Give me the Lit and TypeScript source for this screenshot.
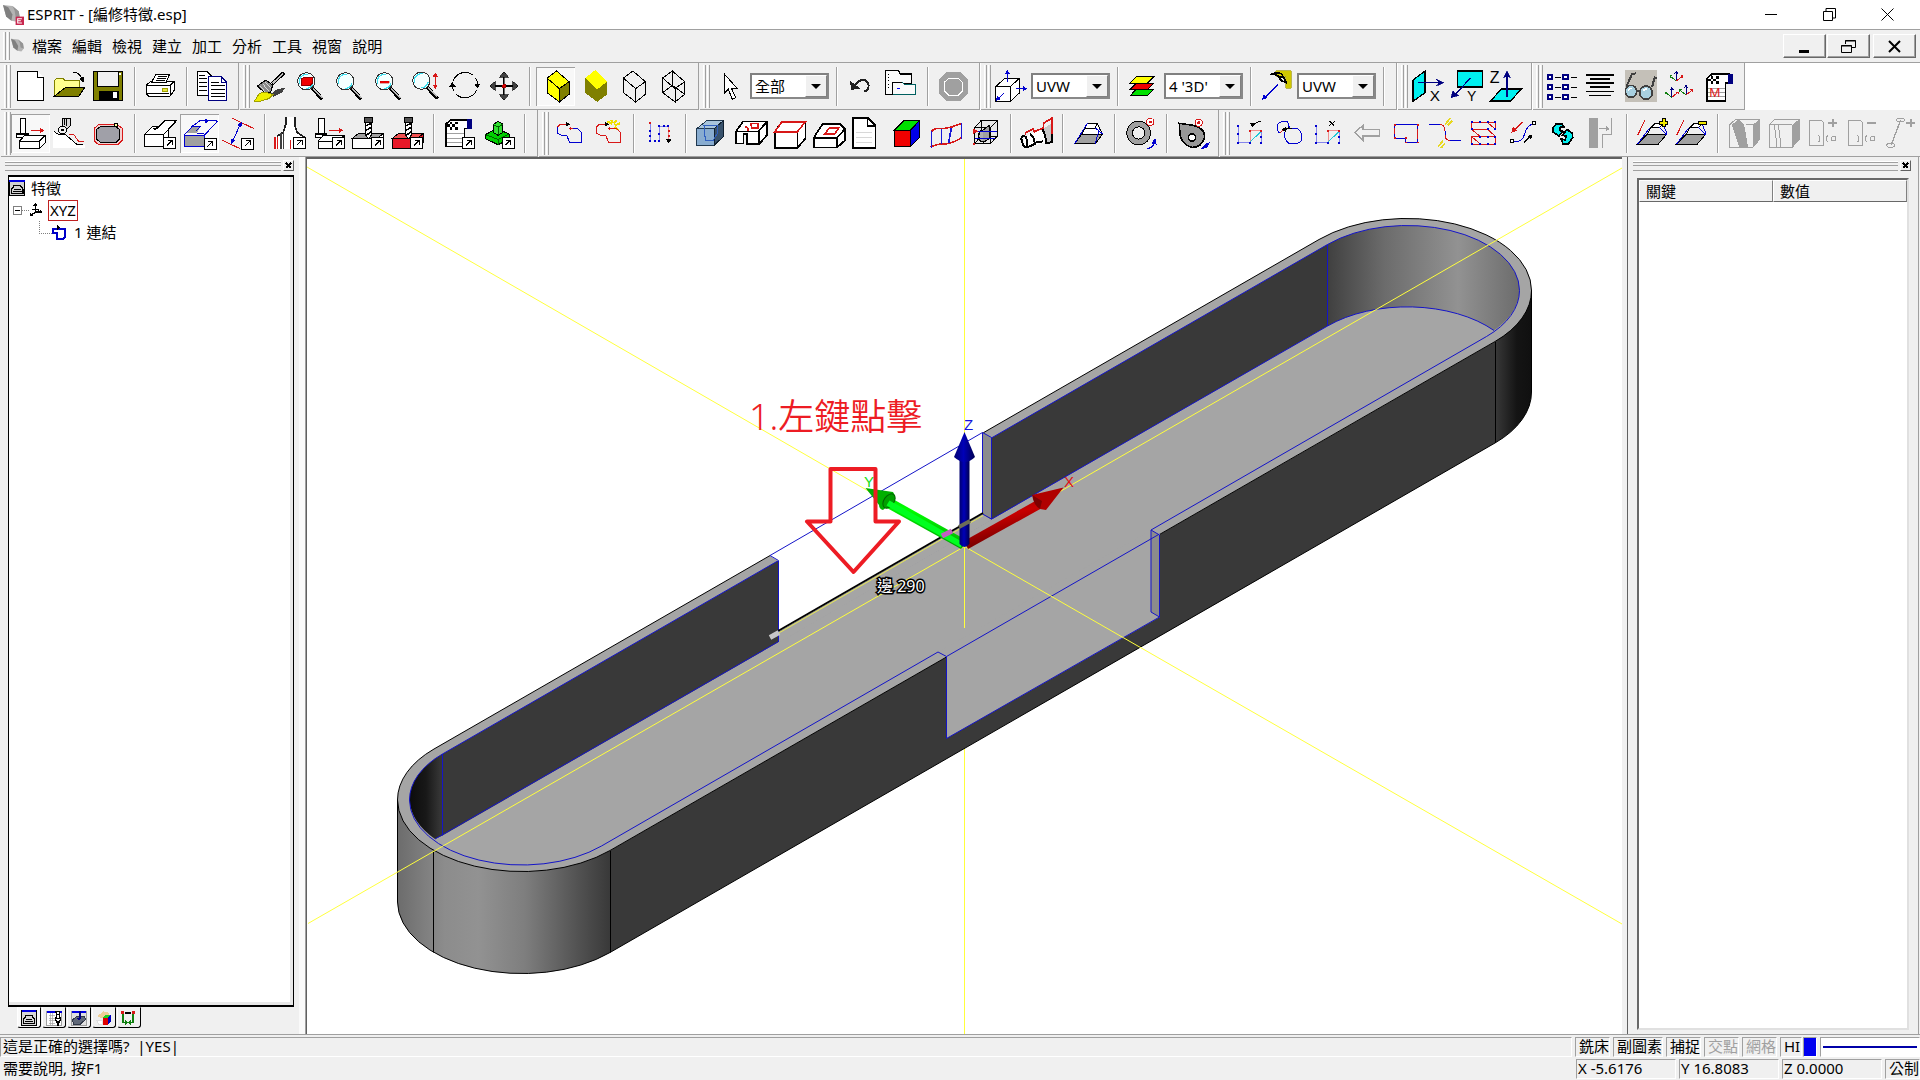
import { LitElement, html, svg, css, nothing } from "lit";
import { customElement, property } from "lit/decorators.js";

/* Icons are drawn on a sheet with three units to the pixel.
   Each icon names the corner of its cell on that sheet. */
type Shape = [d: string, fill?: string, stroke?: string, width?: number];
type Label = { t: string; x: number; y: number; c: string; s: number };
interface Icon { x: number; y: number; art: (Shape | Label)[]; }

const K = "#000";
const N = "none";
const W = "#fff";
const R = "#d81818";
const B = "#0000d0";
const NV = "#000080";
const G = "#a0a0a0";
const CY = "#00f0f0";

const circle = (cx: number, cy: number, r: number, ry = r) =>
  `M${cx - r} ${cy}A${r} ${ry} 0 1 1 ${cx + r} ${cy}A${r} ${ry} 0 1 1 ${cx - r} ${cy}Z`;

const badge = (x: number, y: number): Shape[] => [
  [`M${x} ${y}h36v33h-36Z`, W, K],
  [`M${x + 10} ${y + 24}L${x + 25} ${y + 9}M${x + 12} ${y + 8}h14v14`, N, K],
];

const lens = (cx: number, cy: number): Shape[] => [
  [`M${cx + 18} ${cy + 20}L${cx + 48} ${cy + 54}`, N, K, 11],
  [`M${cx + 20} ${cy + 20}L${cx + 48} ${cy + 50}`, N, "#b8b8b8", 4],
  [circle(cx, cy, 26), "#f4ffff", "#303030", 3],
  [`M${cx - 20} ${cy + 8}A22 22 0 0 1 ${cx + 4} ${cy - 21}M${cx + 20} ${cy + 4}A20 20 0 0 1 ${cx - 2} ${cy + 21}`, N, "#40e0f0", 4],
];

const cube = (x: number, top: string, left: string, right: string, line: string): Shape[] => [
  [`M${x} 54L${x + 29} 33L${x + 66} 65L${x + 37} 86Z`, top, line],
  [`M${x} 54L${x + 37} 86V126L${x} 98Z`, left, line],
  [`M${x + 37} 86L${x + 66} 65V103L${x + 37} 126Z`, right, line],
];

const triad = (x: number, y: number): Shape[] => [
  [`M${x} ${y}v-28m-5 6l5 -6l5 6`, N, NV],
  [`M${x} ${y}l18 -14m-5 -2h6v6`, N, R],
  [`M${x} ${y}l-18 -14m5 -2h-6v6`, N, "#108010"],
];

const chain = (x: number, a: string, b: string): Shape[] => [
  [`M${x} 200V220L${x + 12} 225H${x + 28}L${x + 36} 246H${x + 71}V216L${x + 60} 206H${x + 36}`, N, b],
  [`M${x} 202L${x + 10} 192H${x + 32}M${x + 46} 206H${x + 34}m6 -5v10`, N, a],
  [`M${x + 26} 186L${x + 40} 193L${x + 26} 200Z`, K, N],
];

const dotGrid = (x: number): Shape[] => [
  [`M${x + 3} 198V248H${x + 36}`, N, "#5050e8", 2],
  [`M${x + 38} 212H${x + 72}M${x + 38} 212V246`, N, "#f06060", 2],
  [`M${x + 72} 212V248`, N, "#5050e8", 2],
  [`M${x + 38} 246L${x + 72} 214`, N, "#20c8d8"],
  [`M${x} 198h6M${x} 222h6M${x} 248h6M${x + 34} 248h6M${x + 68} 230h6M${x + 68} 248h6`, N, B, 6],
  [`M${x + 34} 212h6M${x + 68} 212h6`, N, R, 6],
];

const ramp = (x: number): Shape[] => [
  [`M${x} 432L${x + 28} 404H${x + 86}L${x + 62} 432Z`, G, K],
  [`M${x + 28} 404L${x + 40} 382L${x + 52} 370H${x + 76}L${x + 66} 382H${x + 40}`, W, K],
  [`M${x + 66} 382L${x + 86} 404M${x} 432L${x + 36} 384M${x + 76} 370L${x + 88} 402`, N, B],
  [`M${x} 406L${x + 22} 360`, N, R],
];

const plate = (x: number): Shape[] => [
  [`M${x} 362H${x + 34}Q${x + 42} 362 ${x + 42} 370V436H${x}Z`, N, G],
  [`M${x + 28} 406Q${x + 36} 416 ${x + 28} 426M${x + 56} 406Q${x + 46} 416 ${x + 56} 426`, N, G],
  [circle(x + 73, 416, 7), N, G],
];

const mill = (x: number): Shape[] => [
  [`M${x + 10} 356H${x + 26}V402H${x + 10}Z`, W, K],
  [`M${x} 402H${x + 34}V413H${x}Z`, W, K, 4],
  [`M${x + 8} 424L${x + 24} 406H${x + 86}V428L${x + 68} 446H${x + 8}ZM${x + 8} 424H${x + 68}V446M${x + 68} 424L${x + 86} 406`, W, K],
  [`M${x + 42} 391H${x + 82}`, N, R],
  [`M${x + 70} 383L${x + 84} 391L${x + 70} 399Z`, R, N],
];

const drill = (x: number, block: string, body: string): Shape[] => [
  [`M${x} 416L${x + 20} 400H${x + 94}L${x + 76} 416Z`, body, K],
  [`M${x} 416H${x + 76}V444H${x}Z`, block, K],
  [`M${x + 76} 416L${x + 94} 400V426L${x + 76} 444Z`, block, K],
  [`M${x + 36} 352H${x + 62}V366H${x + 36}Z`, "#505050", K],
  [`M${x + 40} 366H${x + 58}V406L${x + 49} 416L${x + 40} 406Z`, W, K],
  [`M${x + 41} 378L${x + 57} 370M${x + 41} 392L${x + 57} 382M${x + 41} 406L${x + 57} 396`, N, K, 5],
];

const sheet = (x: number, y: number): Shape[] => [
  [`M${x} ${y + 14}L${x + 16} ${y}H${x + 66}V${y + 26}H${x + 56}V${y + 80}H${x}Z`, W, K, 5],
  [`M${x + 56} ${y + 26}H${x + 70}`, N, K, 5],
  [`M${x + 64} ${y}H${x + 76}V${y + 27}H${x + 64}Z`, NV, NV],
  [`M${x + 12} ${y + 6}h8v8h-8zM${x + 28} ${y + 6}h8v8h-8zM${x + 20} ${y + 14}h8v8h-8zM${x + 4} ${y + 14}h8v8h-8zM${x + 12} ${y + 22}h8v8h-8zM${x + 28} ${y + 22}h8v8h-8z`, K, N],
  [`M${x + 4} ${y + 42}H${x + 54}M${x + 4} ${y + 56}H${x + 54}M${x + 4} ${y + 68}H${x + 54}`, N, G],
];

const ICONS: Record<string, Icon> = {
  新增: { x: 33, y: 201, art: [["M52 214H112L131 233V301H52Z", W, K], ["M112 214V233H131", W, K]] },
  開啟: { x: 150, y: 201, art: [
    ["M162 288V242L170 235H188L194 241H238V264H196L172 289Z", "#ffff90", "#808000"],
    ["M162 289L196 263H254L236 289Z", "#808000", K],
    ["M220 218Q240 216 247 240", N, K], ["M238 236L254 230L250 250Z", K, N]] },
  儲存: { x: 267, y: 201, art: [
    ["M281 215H368V300H281Z", "#808000", K], ["M293 214H354V260H293Z", "#f0f0f0", K],
    ["M358 219h6v6h-6z", W, N], ["M297 272H356V300H297Z", K, N], ["M338 277H351V295H338Z", W, N]] },
  列印: { x: 423, y: 201, art: [
    ["M438 256L452 244H522V272L510 289H446L438 280Z", W, K], ["M438 256H510V289M510 256L522 244", N, K],
    ["M468 222H509L498 248H454Z", W, K], ["M474 229H500M470 235H498M467 241H494", N, K],
    ["M487 264H501V275H487Z", "#e8e840", "#a0a000"], ["M440 280H508", N, K]] },
  複製: { x: 579, y: 201, art: [
    ["M592 214H620L636 230V286H592Z", W, K], ["M598 226H616M598 236H622M598 247H622M598 258H622M598 270H622", N, K],
    ["M626 229H664L680 246V301H626Z", W, NV, 4], ["M664 229V246H680", N, NV],
    ["M633 246H656M633 257H674M633 268H674M633 279H674M633 290H674", N, K]] },
  重繪: { x: 750, y: 201, art: [
    ["M806 288L826 270L856 262L846 278L822 290Z", "#404040", N],
    ["M852 218L816 252", N, K, 11], ["M850 220L818 250", N, "#c0c0c0", 5],
    ["M772 258L798 240L818 256L812 276L796 280Z", "#8a8a8a", K],
    ["M780 258L796 276M788 252L806 272M796 246L814 264", N, W, 2],
    ["M763 304L778 280L794 276L818 284L806 296L780 304Z", "#f0f000", "#a0a000"]] },
  視窗縮放: { x: 867, y: 201, art: [...lens(919, 244), ["M905 237L911 233H937V249L931 255H905Z", "#f00000", "#900000"]] },
  放大: { x: 984, y: 201, art: lens(1036, 244) },
  縮小: { x: 1101, y: 201, art: [...lens(1153, 244), ["M1140 243H1168V250H1140Z", "#f00000", "#b00000", 1]] },
  動態縮放: { x: 1218, y: 201, art: [...lens(1264, 242), ["M1306 222V262", N, R], ["M1298 230L1306 217L1314 230ZM1298 254L1306 267L1314 254Z", R, N]] },
  旋轉: { x: 1335, y: 201, art: [
    ["M1360 242A38 38 0 0 1 1420 226M1427 234A38 38 0 0 1 1433 256M1430 270A38 38 0 0 1 1368 282M1362 274A38 38 0 0 1 1357 256", N, K],
    ["M1348 260L1357 246L1367 260ZM1423 252H1441L1432 266Z", K, N]] },
  平移: { x: 1452, y: 201, art: [
    ["M1512 228V288M1482 258H1542", N, K, 7], ["M1514 228V288", N, G, 2],
    ["M1498 232L1512 215L1526 232ZM1498 284L1512 301L1526 284ZM1486 244L1469 258L1486 272ZM1538 244L1555 258L1538 272Z", "#404040", K, 2],
    [circle(1512, 258, 6), "#e00000", "#900000", 2]] },
  著色邊線: { x: 108, y: 21, art: cube(141, "#ff0", "#ff0", "#808000", K) },
  著色: { x: 225, y: 21, art: [...cube(255, "#ff0", "#808000", "#808000", N), ["M255 54L286 30L322 64L292 88Z", "#ff0", N]] },
  隱藏線: { x: 342, y: 21, art: cube(370, N, N, N, K) },
  線框: { x: 459, y: 21, art: [...cube(488, N, N, N, K), ["M517 33V76L488 98M517 76L554 103", N, K]] },
  選取: { x: 633, y: 21, art: [["M675 41V101L688 88L700 118L710 113L698 86H715Z", W, K]] },
  復原: { x: 1032, y: 21, art: [["M1066 78Q1080 56 1098 61Q1112 68 1108 84Q1104 94 1094 95", N, "#202020", 6], ["M1053 62L1056 90L1084 86Z", "#202020", N]] },
  群組: { x: 1149, y: 21, art: [
    ["M1160 31H1198L1204 42H1238V70H1184V103H1160Z", "#fafafa", K, 4], ["M1168 42h3M1168 52h3M1168 62h3M1168 72h3M1168 82h3", N, K],
    ["M1181 66H1210L1216 74H1250V104H1181Z", "#fafafa", "#006060"], ["M1181 104V66H1210", N, K], ["M1194 86h10", N, "#0000ff"]] },
  停止: { x: 1305, y: 21, art: [
    ["M1342 36H1384L1407 58V101L1384 124H1342L1320 101V58Z", "#a0a0a0", N],
    ["M1350 54H1377L1390 67V93L1377 107H1350L1336 93V67Z", N, W]] },
  工作平面: { x: 36, y: 21, art: [
    ["M50 80L76 56H120V100L94 124H50Z", W, K], ["M50 80H94V124M94 80L120 56", N, K],
    ["M85 66V36M110 86H140M76 98L54 120", N, B],
    ["M78 42L85 29L93 42ZM132 78L145 86L132 93ZM50 123L54 108L65 118Z", B, N]] },
  圖層: { x: 435, y: 21, art: [
    ["M472 87H524L506 107H454Z", "#00e000", K], ["M472 69H524L506 88H454Z", "#f00000", K], ["M472 50H524L506 69H454Z", "#ff0", K]] },
  視角: { x: 834, y: 21, art: [
    ["M890 32H936V84H920V48H890Z", "#d0c800", "#a09800", 2],
    ["M874 44Q894 34 908 42L924 70M882 40Q900 52 918 54M900 52Q904 64 920 66", N, K, 5],
    ["M897 74L858 112", N, B], ["M849 119L854 103L866 114Z", B, N]] },
  X向: { x: 21, y: 201, art: [
    ["M36 240L72 213V278L36 304Z", CY, K, 4], ["M52 248H120", N, NV, 4], ["M106 238L128 248L106 258L114 248Z", NV, NV, 2],
    { t: "X", x: 86, y: 303, c: K, s: 46 }] },
  Y向: { x: 138, y: 201, art: [
    ["M170 213H244V261H170Z", CY, K, 4], ["M209 234L160 286", N, NV, 4], ["M150 293L156 272L162 282L174 286Z", NV, NV, 2],
    { t: "Y", x: 198, y: 303, c: K, s: 42 }] },
  Z向: { x: 255, y: 201, art: [
    ["M268 303L302 267H362L328 303Z", CY, K, 4], ["M318 290V222", N, NV, 4], ["M308 234L318 212L328 234L318 227Z", NV, NV, 2],
    { t: "Z", x: 266, y: 250, c: K, s: 48 }] },
  屬性: { x: 429, y: 201, art: [
    ["M443 226H457V238H443ZM490 226H504V238H490ZM443 256H457V268H443ZM490 256H504V268H490ZM443 286H457V298H443ZM490 286H504V298H490Z", W, NV, 6],
    ["M464 232H482M514 232H531M464 262H482M514 262H531M464 292H482M514 292H531", N, K, 5]] },
  清單: { x: 546, y: 201, art: [["M558 225H642M570 237H630M558 249H642M570 261H630M558 274H642M566 286H634", N, K, 5]] },
  遮罩: { x: 663, y: 201, art: [
    ["M676 211H770V306H676Z", "#c4c0b8", N],
    [circle(693, 274, 17, 18), "#a8d0e0", "#404040", 5], [circle(738, 278, 19, 20), "#a8d0e0", "#404040", 5],
    ["M710 272L720 274M680 258L696 222L708 220M756 262L764 232L770 236", N, "#404040", 6],
    ["M684 270L694 264M728 272L740 266", N, W, 5]] },
  座標系: { x: 780, y: 201, art: [...triad(829, 243), ...triad(815, 292), ...triad(858, 285)] },
  巨集: { x: 897, y: 201, art: [...sheet(920, 222), { t: "M", x: 928, y: 292, c: "#e02020", s: 40 }] },

  銑削: { x: 33, y: 342, art: mill(50) },
  輪廓: { x: 150, y: 342, art: [
    ["M160 392L178 404H196L230 436H254V444H160Z", W, N],
    ["M188 354H210V378L196 392L180 384L188 376Z", "#d8d8d8", K], ["M192 354V374M200 354V378", N, K],
    [circle(187, 390, 12), "#f0f0f0", K], [circle(187, 390, 3), K, K],
    ["M206 402H220L236 424H252", N, R], ["M162 394L176 404H196L232 434H250", N, K]] },
  口袋: { x: 267, y: 342, art: [
    ["M298 372H350L366 384V422L354 434H296L284 424V384Z", "#f4d0d0", R],
    ["M302 380H348L358 388V418L350 426H300L290 418V388Z", "#a0a0a8", K],
    [circle(348, 375, 6), "#ffffa0", K]] },
  面: { x: 423, y: 342, art: [
    ["M432 404L460 378H474L464 390L496 361H528L504 390V438H432Z", W, K], ["M432 404H490V438M490 404L528 364M496 361L474 384H460", N, K], ...badge(491, 412)] },
  實體面: { x: 540, y: 342, art: [
    ["M552 405H614V440H552Z", "#a0a0a0", B], ["M578 378H602L590 400H558Z", "#a0a0a0", N],
    ["M552 405H614L652 364M600 362H652M552 405L578 378H602L590 392M578 378L600 362M590 400H612", N, B],
    ["M614 355L628 363L614 371Z", B, N], ...badge(612, 416)] },
  斷面: { x: 657, y: 342, art: [
    ["M696 354L762 386M666 420L720 446", N, R], ["M722 370L696 428", N, B],
    ["M726 364L724 382L712 376ZM692 434L693 416L705 422Z", B, N], ...badge(725, 414)] },
  車削: { x: 813, y: 342, art: [
    ["M858 352H886L890 392L914 412V446H826V412L850 392Z", W, N],
    ["M858 352V370L850 396L830 410M884 352V374L892 398L914 412", N, "#202020", 5],
    ["M824 410V446M832 410V446", N, R, 5], ["M842 400V446M850 396V446", N, "#404040", 5], ["M871 420V446", N, R, 5], ...badge(880, 412)] },
  輪廓銑: { x: 930, y: 342, art: [...mill(946), ...badge(998, 412)] },
  鑽孔: { x: 1047, y: 342, art: [...drill(1056, W, G), ...badge(1115, 412)] },
  模具: { x: 1164, y: 342, art: [...drill(1176, "#e81828", "#f05050"), ...badge(1232, 412)] },
  報表: { x: 1320, y: 342, art: [...sheet(1337, 359), ...badge(1388, 412)] },
  模擬: { x: 1437, y: 342, art: [
    ["M1456 404L1490 386L1528 402V418L1494 434L1456 416Z", "#00d000", K], ["M1456 404L1494 418L1528 402M1494 418V434", N, "#006000"],
    ["M1480 374L1494 364L1508 372V398L1494 406L1480 398Z", "#30e030", K], ["M1480 374L1494 381L1508 373M1494 381V404", N, "#006000"], ...badge(1506, 412)] },

  連結: { x: 147, y: 162, art: chain(172, R, B) },
  自動連結: { x: 264, y: 162, art: [
    ["M336 192L322 184M338 190L334 180M342 190L350 180M344 196L360 190M344 200L356 210", N, "#f0e000", 6], ...chain(289, R, R)] },
  點群: { x: 420, y: 162, art: [
    ["M452 190V242M478 242V199H504", N, "#5050e8", 2], ["M506 202V240", N, "#f06060", 2], ["M498 238H514L506 250Z", K, N],
    ["M448 214h6M448 228h6M448 242h6M462 242h6M475 242h6M475 222h6M475 199h6M490 199h6M502 199h6", N, B, 6], ["M448 188h6M503 214h6M503 228h6", N, R, 6]] },
  實體: { x: 576, y: 162, art: [
    ["M590 206L620 182H670L642 206Z", "#a8c4dc", "#203850"], ["M590 206H642V256H590Z", "#88acd0", "#203850"],
    ["M642 206L670 182V230L642 256Z", "#38526c", "#102030"], ["M612 196H652V220L640 240H616Z", N, "#3060c0"]] },
  孔特徵: { x: 693, y: 162, art: [
    ["M708 214L730 184H800V226L778 252H740V222H730V250H708Z", W, K, 5], ["M708 214H776L798 188M776 214V250", N, K, 5],
    ["M746 214Q744 202 736 200M752 190H774V204H756Z", N, R, 5]] },
  面特徵: { x: 810, y: 162, art: [
    ["M825 214L845 186H916V236L892 264H825Z", W, K, 5], ["M892 216V264", N, K, 5], ["M825 215L845 186H916L892 215Z", W, R, 5]] },
  凸台: { x: 927, y: 162, art: [
    ["M942 232L968 192H1020L1034 206V242L1012 262H942Z", W, K, 5], ["M942 234H1010V262M1010 234L1034 208", N, K, 5],
    ["M974 222L988 204H1016L1004 222Z", N, R, 5]] },
  文件: { x: 1044, y: 162, art: [["M1059 174H1104L1126 196V264H1059Z", W, K, 5], ["M1102 174V198H1126", N, K, 5], ["M1068 216H1116M1068 232H1116M1068 248H1116", N, "#d8d8d8"]] },
  彩色實體: { x: 1161, y: 162, art: [
    ["M1184 210L1212 181H1259L1232 210Z", "#00e000", K], ["M1184 210H1232V259H1184Z", "#f00000", K], ["M1232 210L1259 181V232L1232 259Z", "#0000e8", K]] },
  曲面: { x: 1278, y: 162, art: [
    ["M1294 216Q1302 202 1330 206Q1360 202 1384 190M1292 262Q1310 250 1338 252Q1362 248 1384 234", N, R, 5],
    ["M1294 214V264M1324 208V252M1354 204L1346 248M1384 190V236", N, "#1818d8", 5]] },
  零件: { x: 1395, y: 162, art: [
    ["M1424 202L1444 181H1492V228L1472 250H1424Z", "#e8e8e8", K], ["M1424 202H1472V250M1472 202L1492 181M1444 181V228H1492M1444 228L1424 250", N, K],
    [circle(1450, 228, 14, 18), "#b0b0b0", K, 4], ["M1450 210L1468 196V236L1450 246", "#a0a0a0", K],
    ["M1424 214H1490M1424 236H1484", N, B], ["M1420 206L1434 214L1420 222Z", R, N], ["M1420 250h6v6h-6z", R, N]] },
  轉角: { x: 111, y: 162, art: [
    ["M130 236L150 222L190 208L216 196V246L190 248L150 262H134Z", W, N],
    ["M190 206L216 190V246L196 250Z", "#c8c8c8", N],
    ["M124 236Q128 222 138 232Q146 252 140 262Q128 262 124 236ZM150 222Q164 230 164 252L142 262M164 248L190 244M186 206Q198 226 198 250L216 246V198", N, K, 6],
    ["M136 224V218L160 206L164 220M164 214L190 204V190L216 174V222", N, R, 5]] },
  拔模: { x: 267, y: 162, art: [
    ["M284 251L306 222H368L346 251Z", G, K], ["M306 222L322 190H352L368 222", W, K], ["M314 206L322 190H352L346 204Z", W, K], ["M284 251L322 190M346 251L358 206M346 204L368 222", N, B]] },
  環: { x: 423, y: 162, art: [
    [circle(476, 219, 27), N, K, 20], [circle(476, 219, 27), N, "#a0a0a0", 14],
    [circle(511, 186, 11), W, R], [circle(511, 186, 3), R, R],
    ["M502 266Q520 264 524 244", N, B, 4], ["M514 250L526 234L530 254Z", B, N]] },
  凸輪: { x: 579, y: 162, art: [
    ["M598 190L640 196Q676 206 674 232Q664 264 634 262Q606 252 600 226Z", "#989898", K, 5], [circle(636, 232, 11), W, K, 5],
    [circle(656, 188, 11), W, R], [circle(656, 188, 3), R, R], ["M668 264Q682 264 686 250L676 254Z", B, B, 4]] },
  匯入點: { x: 753, y: 162, art: [...dotGrid(775), ["M846 184Q828 186 824 196", N, K], ["M814 190L830 190L820 202Z", K, N]] },
  圓弧: { x: 870, y: 162, art: [
    ["M902 220Q890 206 896 192Q908 180 926 186L932 206H956Q972 216 966 244Q950 256 930 250Q914 240 916 216", N, B],
    ["M902 220L916 206", N, R], ["M938 206Q926 202 920 208", N, K, 4], ["M908 210L920 200L922 216Z", K, N]] },
  刪除點: { x: 987, y: 162, art: [...dotGrid(1009), ["M1052 184L1066 197M1068 184L1050 197", N, K]] },
  反向: { x: 1104, y: 162, art: [["M1128 217L1152 196V208H1201V228H1152V241Z", N, G, 4]] },
  裁剪: { x: 1221, y: 162, art: [
    ["M1246 194H1315V247H1280V234H1246Z", N, B], ["M1315 206V236M1246 204V222", N, R], ["M1244 194h6M1313 194h6M1244 234h6M1277 234h6M1277 247h6M1313 247h6", N, R, 5]] },
  圓角: { x: 78, y: 342, art: [
    ["M90 374H122Q138 374 138 392V404Q138 421 152 421H186", N, B], ["M122 374Q138 374 138 392M138 404Q138 420 152 421", N, R],
    ["M138 374L154 354M146 376L160 362M118 440L132 422M126 444L138 430", N, "#e8d820", 5]] },
  格點: { x: 195, y: 342, art: [
    ["M218 368H290V388L266 368M218 368V388L244 410H218V432L290 432V410L266 388H218M244 388H266M244 410H290M218 410L244 432", N, R],
    ["M217 366h6M241 366h6M264 366h6M286 366h6M217 388h6M264 388h6M286 388h6M241 410h6M264 410h6M286 410h6M217 432h6M241 432h6M264 432h6M286 432h6", N, B, 6]] },
  延伸: { x: 312, y: 342, art: [
    ["M344 424Q370 428 376 404Q384 376 402 372", N, B], [circle(339, 423, 5), W, K], [circle(405, 369, 5), W, K],
    ["M370 366L346 390", N, R, 4], ["M337 398L342 380L356 392Z", R, N], ["M374 428L392 412", N, K, 4], ["M400 404L396 420L384 408Z", K, N]] },
  更新: { x: 429, y: 342, art: [
    ["M461 384L472 371H488L496 382L484 380L482 392L492 394L480 408L462 396Z", CY, K, 5],
    ["M521 412L508 432H492L486 416L498 420L502 408L490 406L504 388L520 400Z", CY, K, 5]] },
  靠齊: { x: 546, y: 342, art: [["M570 354H597V444H570Z", "#a0a0a0", N], ["M600 386H626M637 354V404H610V444", N, G], ["M622 378L632 386L622 394Z", G, N]] },
  加入面: { x: 702, y: 342, art: [...ramp(716), ["M794 354V382M780 368H808", N, K, 11], ["M794 357V379M783 368H805", N, "#f0e800", 5]] },
  移除面: { x: 819, y: 342, art: [...ramp(833), ["M896 368H924", N, K, 11], ["M899 368H921", N, "#f0e800", 5]] },
  分割一: { x: 975, y: 342, art: [
    ["M992 374L1010 358H1082V418L1062 442H992Z", N, G], ["M1000 374L1020 360L1034 374L1046 442H1022Z", "#a0a0a0", G], ["M1062 376L1082 360V418L1062 442Z", "#a0a0a0", G], ["M1040 374H1062", N, G]] },
  分割二: { x: 1092, y: 342, art: [
    ["M1110 374L1128 358H1200V418L1180 442H1110Z", N, G], ["M1110 374H1180", N, G], ["M1180 376L1200 360V418L1180 442Z", "#a0a0a0", G],
    ["M1126 372L1134 440M1138 372L1146 440", N, G]] },
  加孔: { x: 1209, y: 342, art: [...plate(1231), ["M1301 356V382M1288 369H1314", N, G, 7]] },
  減孔: { x: 1326, y: 342, art: [...plate(1348), ["M1405 368H1432", N, G, 7]] },
  加路徑: { x: 1443, y: 342, art: [
    [circle(1505, 360, 12, 6), N, G], [circle(1475, 436, 12, 6), N, G], ["M1505 360L1477 434", N, G, 4], ["M1535 356V382M1522 369H1548", N, G, 7]] },
};

const SMALL: Record<string, Icon> = {
  feature: { x: 26, y: 90, art: [
    ["M28 92H73V136H28Z", "#d0d0d0", K, 4], ["M27 93H74", N, "#0000e0", 6],
    ["M34 130V118L42 106H60L68 118V130Z", "#d0d0d0", K, 4], ["M40 118H62M38 124H64", N, K, 3]] },
  axes: { x: 92, y: 156, art: [
    ["M111 162V190M111 186H130M111 186L96 198", N, K, 4], ["M104 168L111 158L118 168ZM124 178L134 186L124 192ZM94 200L96 190L104 198Z", K, N],
    ["M102 178H120V190", N, K, 4]] },
  chain: { x: 156, y: 220, art: [["M160 234H196V260L190 264H170V248H160Z", W, "#0000c8", 6], ["M172 224L182 231L172 238Z", K, N]] },
  tabFeature: { x: 66, y: 90, art: [
    ["M68 92H111V136H68Z", "#d8d8d8", K, 3], ["M68 94H112", N, "#0000e0", 6],
    ["M74 130V118L82 106H98L106 118V130Z", "#d8d8d8", K, 4], ["M80 118H100M78 124H102", N, K, 3]] },
  tabTool: { x: 140, y: 90, art: [
    ["M142 94H186V136H142Z", W, G, 3], ["M142 95H188", N, "#0000e0", 6], ["M148 106H168M148 114H168M148 122H168M148 130H168M152 100V134M160 100V134", N, G, 2],
    ["M170 94H180V108L184 116L176 136L168 116L172 108Z", W, K, 4], ["M170 104H182M170 116H182M172 126H180", N, K, 4]] },
  tabPart: { x: 216, y: 90, art: [
    ["M218 94H262V136H218Z", "#e0e0e0", G, 3], ["M218 95H262", N, "#0000e0", 6], ["M220 120L236 108H256L260 118L244 132H224Z", "#606878", "#303848"],
    ["M244 92V114L236 118", N, NV, 6]] },
  tabSolid: { x: 292, y: 90, art: [
    ["M296 108L314 94L330 98L334 108L310 116Z", "#f0d098", N], ["M294 120H312V132H300Z", W, "#e0e0e0"],
    ["M312 114L322 104H336L328 114Z", "#20d020", N], ["M312 114H328V134H312Z", "#e00000", N], ["M328 114L336 104V124L328 134Z", "#0000c0", N]] },
  tabPath: { x: 368, y: 90, art: [
    ["M374 128V98M404 98V128M374 128H384M404 128H394M380 122L386 128L380 134M398 122L392 128L398 134", N, "#108010", 4],
    ["M380 98H398", N, K, 5], ["M368 94h10v8h-10zM400 94h10v8h-10z", R, N]] },
};

const drawIcon = (icon: Icon, units = 117, size = 39) => svg`
  <svg viewBox="${icon.x} ${icon.y} ${units} ${units}" width=${size} height=${size} aria-hidden="true">
    ${icon.art.map((s) => Array.isArray(s)
      ? svg`<path d=${s[0]} fill=${s[1] ?? N} stroke=${s[2] ?? K} stroke-width=${s[3] ?? 3}></path>`
      : svg`<text x=${s.x} y=${s.y} fill=${s.c} font-size=${s.s} font-family="Liberation Sans, sans-serif">${s.t}</text>`)}
  </svg>`;

type Item = string | { pick: string; options: string[]; name: string };
interface Bar { items: Item[]; on?: string[]; }

const SEP = "|";
const TOP_BARS: Bar[] = [
  { items: ["新增", "開啟", "儲存", SEP, "列印", SEP, "複製"] },
  { items: ["重繪", "視窗縮放", "放大", "縮小", "動態縮放", "旋轉", "平移", SEP, "著色邊線", "著色", "隱藏線", "線框"], on: ["著色邊線"] },
  { items: ["選取", { name: "選取類型", pick: "全部", options: ["全部"] }, SEP, "復原", "群組", SEP, "停止"] },
  { items: ["工作平面", { name: "平面", pick: "UVW", options: ["UVW"] }, SEP, "圖層", { name: "層", pick: "4 '3D'", options: ["4 '3D'"] }, SEP,
    "視角", { name: "視圖", pick: "UVW", options: ["UVW"] }, SEP] },
  { items: ["X向", "Y向", "Z向"] },
  { items: ["屬性", "清單", "遮罩", "座標系", "巨集"] },
];
const LOW_BARS: Bar[] = [
  { items: ["銑削", "輪廓", "口袋", SEP, "面", "實體面", "斷面", SEP, "車削", "輪廓銑", "鑽孔", "模具", SEP, "報表", "模擬", SEP], on: ["銑削", "實體面"] },
  { items: ["連結", "自動連結", SEP, "點群", SEP, "實體", "孔特徵", "面特徵", "凸台", "文件", "彩色實體", "曲面", "零件", SEP, "轉角", SEP, "拔模", SEP, "環", SEP, "凸輪"] },
  { items: ["匯入點", "圓弧", "刪除點", "反向", "裁剪", "圓角", "格點", "延伸", "更新", "靠齊", SEP, "加入面", "移除面", SEP, "分割一", "分割二", "加孔", "減孔", "加路徑"] },
];

const MENUS = ["檔案", "編輯", "檢視", "建立", "加工", "分析", "工具", "視窗", "說明"];
const FONT = css`"Noto Sans", "Noto Sans CJK TC", sans-serif`;

@customElement("tool-strip")
export class ToolStrip extends LitElement {
  @property({ attribute: false }) bar: Bar = { items: [] };

  static styles = css`
    :host { display: flex; box-sizing: border-box; height: 47px; padding: 4px 6px 3px 0; background: #f0f0f0;
      border-right: 1px solid #a0a0a0; border-bottom: 1px solid #a0a0a0; }
    .grip { width: 7px; margin: -2px 0 0 3px; height: 43px; box-sizing: border-box; display: flex; gap: 1px; flex: none; }
    .grip i { width: 3px; box-sizing: border-box; border-right: 1px solid #a0a0a0; border-left: 1px solid #fff; }
    button { width: 39px; height: 39px; padding: 0; border: 0; background: none; flex: none; display: block; }
    button svg { display: block; shape-rendering: crispEdges; overflow: visible; }
    .on { background: #f8f8f8; box-shadow: inset 1px 1px #a0a0a0, inset -1px -1px #fff; }
    .sep { width: 13px; flex: none; display: flex; justify-content: center; }
    .sep i { width: 1px; background: #a0a0a0; border-right: 1px solid #fff; }
    .combo { width: 79px; height: 26px; margin: 6px 1px; display: grid; grid-template-columns: 1fr 22px; box-sizing: border-box;
      border: 2px solid; border-color: #808080 #888 #888 #808080; background: #fff; flex: none; }
    select { grid-area: 1 / 1 / 2 / 3; appearance: none; border: 0; margin: 0; padding: 0 0 0 3px; background: none; min-width: 0;
      font: 15px/20px ${FONT}; color: #000; }
    .drop { grid-area: 1 / 2 / 2 / 3; background: #f0f0f0; border: 1px solid; border-color: #fff #808080 #808080 #fff;
      display: flex; align-items: center; justify-content: center; pointer-events: none; }
    .drop i { border: 5px solid transparent; border-top-color: #000; border-bottom: 0; }
  `;

  render() {
    return html`<span class="grip"><i></i><i></i></span>
      ${this.bar.items.map((item) => {
        if (item === SEP) return html`<span class="sep"><i></i></span>`;
        if (typeof item === "string") {
          return html`<button class=${this.bar.on?.includes(item) ? "on" : ""} aria-label=${item}>${drawIcon(ICONS[item])}</button>`;
        }
        return html`<span class="combo">
          <select aria-label=${item.name}>${item.options.map((o) => html`<option ?selected=${o === item.pick}>${o}</option>`)}</select>
          <span class="drop"><i></i></span></span>`;
      })}`;
  }
}

@customElement("model-view")
export class ModelView extends LitElement {
  static styles = css`
    :host { display: block; min-width: 0; min-height: 0; background: #fff; overflow: hidden; }
    svg { display: block; width: 100%; height: 100%; }
    .edge { fill: none; stroke: #000; stroke-width: 1; }
    .heavy { fill: none; stroke: #000; stroke-width: 2; }
    .hot { fill: none; stroke: #1414c8; stroke-width: 1; }
    .guide { fill: none; stroke: #ffff3c; stroke-width: 1; }
    .top { fill: #a5a5a5; }
    .wall { fill: #393939; }
    .side { fill: #8c8c8c; }
    .note { font: 36px ${FONT}; font-weight: 350; fill: #ed1c24; }
    .mark { fill: none; stroke: #ed1c24; stroke-width: 4; stroke-linejoin: round; }
    .tip { font: 16px ${FONT}; fill: #fff; stroke: #000; stroke-width: 3; paint-order: stroke; }
    .axis { font: 15px "Liberation Sans", sans-serif; }
  `;

  render() {
    return html`<svg viewBox="307 159 1315 875" preserveAspectRatio="xMidYMid slice" role="img" aria-label="模型">
      <defs>
        <linearGradient id="drumL"><stop offset="0" stop-color="#6c6c6c"/><stop offset=".22" stop-color="#8c8c8c"/><stop offset=".38" stop-color="#929292"/><stop offset=".6" stop-color="#7e7e7e"/><stop offset=".85" stop-color="#525252"/><stop offset="1" stop-color="#393939"/></linearGradient>
        <linearGradient id="drumR"><stop offset="0" stop-color="#393939"/><stop offset=".6" stop-color="#141414"/><stop offset="1" stop-color="#101010"/></linearGradient>
        <linearGradient id="bowlR"><stop offset="0" stop-color="#404040"/><stop offset=".3" stop-color="#6c6c6c"/><stop offset=".68" stop-color="#929292"/><stop offset="1" stop-color="#6c6c6c"/></linearGradient>
        <linearGradient id="bowlL"><stop offset="0" stop-color="#0c0c0c"/><stop offset=".5" stop-color="#181818"/><stop offset="1" stop-color="#3a3a3a"/></linearGradient>
        <linearGradient id="zRod"><stop offset="0" stop-color="#000070"/><stop offset=".45" stop-color="#0000b8"/><stop offset="1" stop-color="#000050"/></linearGradient>
        <linearGradient id="xRod" x1="0" y1="0" x2=".4" y2="1"><stop offset="0" stop-color="#900000"/><stop offset=".45" stop-color="#c80000"/><stop offset="1" stop-color="#600000"/></linearGradient>
        <linearGradient id="yRod" x1="1" y1="0" x2=".6" y2="1"><stop offset="0" stop-color="#00b000"/><stop offset=".45" stop-color="#00ff00"/><stop offset="1" stop-color="#008000"/></linearGradient>
      </defs>

      <path class="guide" d="M964.5 158V440M964.5 740V1034"/>

      <path fill="url(#drumL)" d="M397.5 800V902A124.5 72 0 0 0 610 952.5V851Z"/>
      <path class="wall" d="M610 850.5L1495 341.5V443L610 952.5Z"/>
      <path fill="url(#drumR)" d="M1495 341.5L1531.5 290V392A124.5 72 0 0 1 1495 443Z"/>
      <path class="top" d="M434 749L1319 239.5A124.5 72 0 0 1 1531.5 290.5A124.5 72 0 0 1 1495 341.5L610 850.5A124.5 72 0 0 1 397.5 800A124.5 72 0 0 1 434 749Z"/>
      <path class="edge" d="M434 749L1319 239.5A124.5 72 0 0 1 1531.5 290.5A124.5 72 0 0 1 1495 341.5L610 850.5A124.5 72 0 0 1 397.5 800A124.5 72 0 0 1 434 749Z"/>
      <path class="edge" d="M397.5 800V902A124.5 72 0 0 0 610 952.5L1495 443A124.5 72 0 0 0 1531.5 392V290M433.5 851V952.5M610.5 851V952.5M1495.5 342V443"/>

      <path class="wall" d="M442.5 754L1327.5 244.5V326L442.5 835.5Z"/>
      <path fill="url(#bowlL)" d="M442.5 754A112.5 65 0 0 0 409.5 800A112.5 65 0 0 0 435 839L442.5 835.5Z"/>
      <path fill="url(#bowlR)" d="M1327.5 244.5A112.5 65 0 0 1 1519.5 290.5A112.5 65 0 0 1 1494 330.5A112.5 65 0 0 0 1327.5 326Z"/>
      <path class="hot" d="M442.5 754L1327.5 244.5A112.5 65 0 0 1 1519.5 290.5A112.5 65 0 0 1 1486.5 336.5L1151 530M938 652L601.5 846A112.5 65 0 0 1 409.5 800A112.5 65 0 0 1 442.5 754V835.5M435 839L1327.5 326A112.5 65 0 0 1 1494 330.5M1327.5 244.5V326"/>

      <path fill="#fff" d="M770 553L983 430V514L778.5 632V561L770 556Z"/>
      <path class="top" d="M778.5 632L983 514L992 520L778.5 643Z"/>
      <path class="side" d="M982.5 432L991.5 437.5V519L982.5 514Z"/>
      <path class="hot" d="M770 555.5L778.5 560.5V642M770 555.5L982.5 432.5L991.5 437.5V519L982.5 514V432.5"/>

      <path class="top" d="M938 652L1151 530L1160 533V617L946.5 738.5V656.5Z"/>
      <path class="side" d="M1151 530L1159.5 535V617L1151 612Z"/>
      <path class="hot" d="M938 652L946.5 656.5V738.5L1159.5 617V535L1151 530V612L1159.5 617M946.5 656.5L1159.5 534"/>

      <path class="heavy" d="M778 631L983 513"/>
      <path d="M778 633.5L983 515.5" fill="none" stroke="#e8e850"/>
      <path d="M770 637.5L779 632.5" stroke="#c8c8c8" stroke-width="5"/>
      <path class="guide" d="M308 923.5L964.5 546.5L1622 168M307 167L964.5 546.5L1622 924M964.5 546V628"/>

      <path d="M961 549L887 508L891 498L968 541Z" fill="url(#yRod)"/>
      <path d="M865.5 488L893 492Q897 498 894 501L883 510Q879 509 879 505Z" fill="#00b000"/>
      <ellipse cx="889" cy="501" rx="5" ry="8" transform="rotate(35 889 501)" fill="#00a000" stroke="#006000"/>
      <path d="M962 545L888 503" stroke="#00ff20" stroke-width="6"/>
      <path d="M964 541L1037 500L1042 508L968 549Z" fill="url(#xRod)"/>
      <path d="M1063.5 487.5L1032 495Q1036 499 1040 509L1046 510Z" fill="#b00000"/>
      <path d="M1032 495L1042 501L1040 509Q1034 506 1032 495Z" fill="#7c0000"/>
      <path d="M942 536L952 531" stroke="#c060c0" stroke-width="5"/>
      <path d="M959.5 460H969.5V544Q964.5 550 959.5 544Z" fill="url(#zRod)"/>
      <path d="M964.5 432L975 457Q965 467 954 457Z" fill="url(#zRod)"/>
      <path d="M959 527L970 521" stroke="#6c6c58" stroke-width="4"/>
      <text class="axis" x="964" y="430" fill="#1414dc">Z</text>
      <text class="axis" x="1064" y="487" fill="#e01414">X</text>
      <text class="axis" x="864" y="487" fill="#14dc14">Y</text>

      <path class="mark" d="M830.5 469H875.5V521.5H899L853.5 572L807 521.5H830.5Z"/>
      <text class="note" x="749" y="430">1.左鍵點擊</text>
      <text class="tip" x="877" y="592">邊 290</text>
    </svg>`;
  }
}

@customElement("app-root")
export class AppRoot extends LitElement {
  static styles = css`
    :host { display: flex; flex-direction: column; height: 100vh; background: #f0f0f0; color: #000; font: 15px/20px ${FONT}; overflow: hidden; }
    button { font: inherit; color: inherit; padding: 0; margin: 0; border: 0; background: none; }
    svg { display: block; shape-rendering: crispEdges; }
    .title { height: 29px; flex: none; background: #fff; border-bottom: 1px solid #a0a0a0; display: flex; align-items: center; padding: 0 4px 0 3px; }
    .title h1 { font: inherit; line-height: 28px; height: 29px; margin: 0 0 0 3px; flex: 1; }
    .title svg, .menu svg { shape-rendering: auto; }
    .caption { width: 58px; height: 29px; display: grid; place-items: center; }
    .menu { height: 32px; flex: none; border-bottom: 1px solid #a0a0a0; display: flex; align-items: center; padding: 0 4px 0 3px; gap: 10px; }
    .grip { height: 28px; width: 7px; display: flex; gap: 1px; }
    .grip i { width: 2px; border-right: 1px solid #a0a0a0; border-left: 1px solid #fff; }
    .menu .logo { margin: 0 -5px 0 -9px; }
    .mdi { margin-left: auto; display: flex; gap: 1px; }
    .mdi button { width: 43px; height: 24px; display: grid; place-items: center; border: 1px solid; border-color: #fff #686868 #686868 #fff; box-shadow: inset -1px -1px #a0a0a0; box-sizing: border-box; }
    .mdi button:last-child { margin-left: 2px; }
    .bars { display: flex; flex: none; background: linear-gradient(90deg, #f0f0f0 50%, #fff 50%); gap: 1px; padding-left: 1px; }
    .bars.low { background: #f0f0f0; }
    .bars.low tool-strip:last-child { flex: 1; min-width: 0; padding-right: 0; border-right: 0; }
    .main { flex: 1; min-height: 0; display: grid; grid-template-columns: 306px minmax(0, 1fr) 298px; border-bottom: 1px solid #a0a0a0; }
    .dock { display: flex; flex-direction: column; min-height: 0; }
    .left { padding: 3px 11px 4px 5px; border-right: 1px solid #a0a0a0; box-shadow: inset -6px 0 #fafafa; }
    .right { padding: 3px 7px 4px 5px; border-left: 1px solid #606060; margin-left: 5px; border-right: 1px solid #a0a0a0; margin-right: 1px; }
    .bar { height: 10px; flex: none; display: flex; align-items: center; gap: 2px; }
    .bar i { flex: 1; height: 2px; border: solid #a0a0a0; border-width: 1px 0; box-shadow: 0 4px #f0f0f0, 0 5px #a0a0a0, 0 -1px #fff; margin-bottom: 3px; }
    .bar button { width: 11px; height: 11px; border: 1px solid; border-color: #fff #606060 #606060 #fff; display: grid; place-items: center; box-sizing: border-box; }
    model-view { border-left: 1px solid #606060; border-top: 2px solid #606060; }
    .tree { flex: 1; margin: 5px 0 0 3px; background: #fff; border: 1px solid #000; border-width: 2px 1px 2px 1px; box-shadow: inset -3px -3px #e8e8e8; }
    .tree ul { list-style: none; margin: 0; padding: 0; }
    .tree li { height: 22px; line-height: 21px; display: flex; align-items: center; gap: 6px; }
    .kid { padding-left: 4px; }
    .kid2 { padding-left: 30px; }
    .tree .picked { margin-left: -3px; }
    .box { width: 7px; height: 7px; border: 1px solid #808080; display: grid; place-items: center; }
    .box::after { content: ""; width: 5px; height: 1px; background: #000; }
    .dots { width: 7px; border-top: 1px dotted #808080; margin: 0 -6px; }
    .elbow { width: 12px; height: 12px; border: dotted #808080; border-width: 0 0 1px 1px; margin: -10px -6px 0 0; }
    .picked { border: 1px solid #c02020; padding: 0 1px; line-height: 19px; }
    .tabs { display: flex; gap: 1px; padding-left: 12px; height: 23px; flex: none; }
    .tabs button { width: 24px; height: 21px; display: grid; place-items: center; border: 1px solid; border-color: transparent #000 #000 #fff; border-radius: 0 0 3px 3px; box-sizing: border-box; background: #f0f0f0; }
    .tabs button:first-child { background: #fafafa; }
    .grid { flex: 1; margin: 8px 2px 0 4px; background: #fff; border: 2px solid; border-color: #686868 #e0e0e0 #e0e0e0 #686868; }
    table { width: 100%; border-collapse: separate; border-spacing: 0; table-layout: fixed; }
    th { font-weight: 400; text-align: left; height: 20px; padding: 0 0 0 6px; background: #f0f0f0; border: 1px solid; border-color: #fff #808080 #686868 #fff; }
    .status { height: 45px; flex: none; box-sizing: border-box; padding-top: 2px; display: flex; flex-direction: column; gap: 2px; }
    .line { display: flex; gap: 3px; height: 20px; line-height: 17px; white-space: pre; }
    .line > span { box-sizing: border-box; border: 1px solid; border-color: #a0a0a0 #fff #fff #a0a0a0; padding-left: 3px; overflow: hidden; }
    .line .msg { flex: 1; padding-left: 2px; }
    .line .plain { border-color: transparent; }
    .line .num { width: 100px; padding-left: 1px; }
    .s2 { width: 35px; } .s3 { width: 50px; } .hi { width: 22px; }
    .dim { color: #a0a0a0; }
    .line .chip { width: 14px; background: #0000f0; margin-left: -2px; }
    .line .pen { width: 100px; background: #fff; display: flex; align-items: center; padding: 0 2px; }
    .pen i { flex: 1; height: 2px; background: #0000a8; }
  `;

  private logo(size: number, tag: boolean) {
    return svg`<svg class="logo" viewBox="0 0 20 20" width=${size} height=${size} aria-hidden="true">
      <path d="M0 1L9 2L15 7L16 13L13 17L8 16L3 12Z" fill="#b4b4b4"></path>
      <path d="M0 1L5 3L9 10L8 16L3 12Z" fill="#808080"></path>
      <path d="M9 2L15 7L16 13L12 12L11 6Z" fill="#949494"></path>
      ${tag ? svg`<path d="M12 12H20V20H12Z" fill="#c82850"></path><path d="M18 14H14V18H18M14 16H17" fill="none" stroke="#fff"></path>` : nothing}
    </svg>`;
  }

  private close() {
    return html`<button aria-label="關閉面板"><svg width="7" height="7" viewBox="0 0 7 7"><path d="M1 1L6 6M6 1L1 6" stroke="#000" stroke-width="2"/></svg></button>`;
  }

  render() {
    return html`
      <header class="title">
        ${this.logo(21, true)}
        <h1>ESPRIT - [編修特徵.esp]</h1>
        <button class="caption" aria-label="最小化"><svg width="12" height="12"><path d="M0 5.5H12" stroke="#000"/></svg></button>
        <button class="caption" aria-label="還原"><svg width="13" height="13" fill="none" stroke="#000"><path d="M.5 3.5H9.5V12.5H.5ZM3 3V.5H12.5V10H10"/></svg></button>
        <button class="caption" aria-label="關閉"><svg width="13" height="13" stroke="#000"><path d="M.5 .5L12.5 12.5M12.5 .5L.5 12.5"/></svg></button>
      </header>
      <nav class="menu">
        <span class="grip"><i></i><i></i></span>
        ${this.logo(16, false)}
        ${MENUS.map((m) => html`<button>${m}</button>`)}
        <span class="mdi">
          <button aria-label="最小化文件"><svg width="15" height="14"><path d="M2 11H12V14H2Z"/></svg></button>
          <button aria-label="還原文件"><svg width="15" height="14" fill="none" stroke="#000"><path d="M4.5 5V1.5H14.5V8.5H11M4 2H15M.5 6.5H10.5V13.5H.5ZM0 7H11"/></svg></button>
          <button aria-label="關閉文件"><svg width="13" height="13" stroke="#000" stroke-width="2"><path d="M1 1L12 12M12 1L1 12"/></svg></button>
        </span>
      </nav>
      <div class="bars">${TOP_BARS.map((b) => html`<tool-strip .bar=${b}></tool-strip>`)}</div>
      <div class="bars low">${LOW_BARS.map((b) => html`<tool-strip .bar=${b}></tool-strip>`)}</div>

      <main class="main">
        <aside class="dock left">
          <div class="bar"><i></i>${this.close()}</div>
          <div class="tree">
            <ul>
              <li>${drawIcon(SMALL.feature, 48, 16)}<span>特徵</span></li>
              <li class="kid"><span class="box"></span><span class="dots"></span>${drawIcon(SMALL.axes, 48, 16)}<span class="picked">XYZ</span></li>
              <li class="kid2"><span class="elbow"></span>${drawIcon(SMALL.chain, 48, 16)}<span>1 連結</span></li>
            </ul>
          </div>
          <div class="tabs">
            ${[["特徵", "tabFeature"], ["刀具", "tabTool"], ["加工", "tabPart"], ["實體", "tabSolid"], ["路徑", "tabPath"]].map(([name, key]) =>
              html`<button aria-label=${name}>${drawIcon(SMALL[key], 48, 16)}</button>`)}
          </div>
        </aside>
        <model-view></model-view>
        <aside class="dock right">
          <div class="bar"><i></i>${this.close()}</div>
          <div class="grid"><table><thead><tr><th>關鍵</th><th>數值</th></tr></thead></table></div>
        </aside>
      </main>

      <footer class="status">
        <div class="line">
          <span class="msg">這是正確的選擇嗎?  |YES|</span>
          <span class="s2">銑床</span><span class="s3">副圖素</span><span class="s2">捕捉</span>
          <span class="s2 dim">交點</span><span class="s2 dim">網格</span><span class="hi">HI</span>
          <span class="chip"></span><span class="pen"><i></i></span>
        </div>
        <div class="line">
          <span class="msg plain">需要說明, 按F1</span>
          <span class="num">X -5.6176</span><span class="num">Y 16.8083</span><span class="num">Z 0.0000</span><span class="s2">公制</span>
        </div>
      </footer>`;
  }
}
